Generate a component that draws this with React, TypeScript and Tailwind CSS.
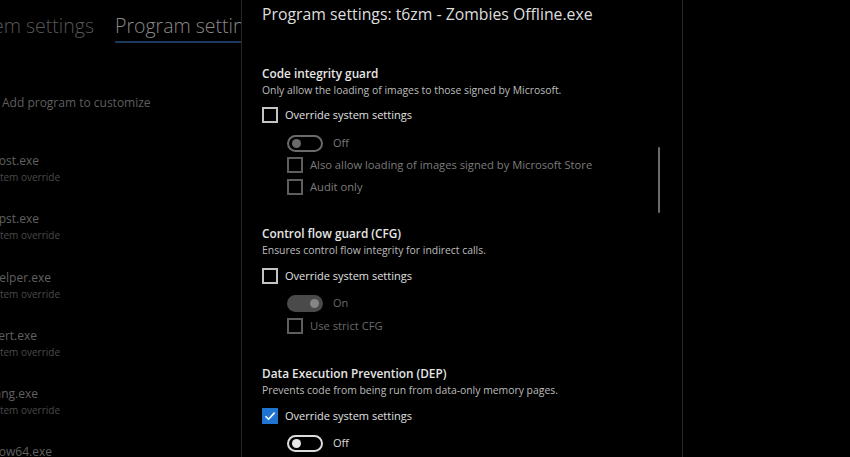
import React from "react";

const font = { fontFamily: '"Open Sans", "Noto Sans", sans-serif' };

function Check({ checked, disabled }: { checked?: boolean; disabled?: boolean }) {
  if (checked) {
    return (
      <div className="w-[16px] h-[16px] shrink-0 bg-[#1f74d2] flex items-center justify-center">
        <svg width="12" height="12" viewBox="0 0 12 12">
          <path d="M1.5 6.2 L4.6 9.2 L10.6 2.6" fill="none" stroke="#ffffff" strokeWidth="1.6" />
        </svg>
      </div>
    );
  }
  return (
    <div
      className={
        disabled
          ? "w-[16px] h-[16px] shrink-0 border-2 border-[#5e5e5e]"
          : "w-[16px] h-[16px] shrink-0 border-2 border-[#c4c4c4]"
      }
    />
  );
}

function Toggle({ kind }: { kind: "offDisabled" | "onDisabled" | "off" }) {
  if (kind === "onDisabled") {
    return (
      <div className="w-[36px] h-[17px] rounded-full bg-[#4a4a4a] flex items-center justify-end pr-[4px] shrink-0">
        <div className="w-[9px] h-[9px] rounded-full bg-[#858585]" />
      </div>
    );
  }
  if (kind === "offDisabled") {
    return (
      <div className="w-[36px] h-[17px] rounded-full border-2 border-[#6a6a6a] flex items-center pl-[3px] shrink-0">
        <div className="w-[9px] h-[9px] rounded-full bg-[#6a6a6a]" />
      </div>
    );
  }
  return (
    <div className="w-[36px] h-[17px] rounded-full border-2 border-[#dcdcdc] flex items-center pl-[3px] shrink-0">
      <div className="w-[9px] h-[9px] rounded-full bg-[#e6e6e6]" />
    </div>
  );
}

const items = [
  { name: "PresentationHost.exe", w: "w-[39px]" },
  { name: "scanpst.exe", w: "w-[39px]" },
  { name: "sdxhelper.exe", w: "w-[51px]" },
  { name: "SelfCert.exe", w: "w-[37px]" },
  { name: "setlang.exe", w: "w-[38px]" },
  { name: "splwow64.exe", w: "w-[52px]" },
];

export default function App() {
  return (
    <div className="w-[850px] h-[457px] bg-black flex overflow-hidden" style={font}>
      {/* Left (dimmed) page */}
      <div className="w-[241px] h-full shrink-0 overflow-hidden flex flex-col">
        <div className="h-[43px] flex shrink-0">
          <div className="w-[94px] shrink-0 flex justify-end overflow-hidden whitespace-nowrap">
            <span className="text-[19.5px] leading-[28px] mt-[12px] font-light text-[#575757]">System settings</span>
          </div>
          <div className="ml-[21px] shrink-0 whitespace-nowrap h-[43px] border-b-2 border-[#1d3a5c] pt-[12px]">
            <span className="text-[19.5px] leading-[28px] font-light text-[#8a8a8a] block">Program settings</span>
          </div>
        </div>
        <div className="mt-[51px] h-[20px] flex items-center pl-[2px] text-[12px] text-[#5e5e5e] whitespace-nowrap">
          Add program to customize
        </div>
        <div className="mt-[40px] flex flex-col">
          {items.map((it) => (
            <div key={it.name} className="h-[58.3px] shrink-0 flex flex-col">
              <div className={it.w + " flex justify-end overflow-hidden whitespace-nowrap"}>
                <span className="text-[12px] leading-[18px] text-[#606060]">{it.name}</span>
              </div>
              <div className="w-[60px] flex justify-end overflow-hidden whitespace-nowrap">
                <span className="text-[10px] leading-[15px] text-[#4a4a4a]">System override</span>
              </div>
            </div>
          ))}
        </div>
      </div>

      {/* Dialog panel */}
      <div className="relative w-[442px] h-full shrink-0 border-l border-r border-[#262626] bg-black pl-5 flex flex-col">
        <div className="h-[30px] flex items-center text-[15.8px] text-[#dedede] whitespace-nowrap">
          Program settings: t6zm - Zombies Offline.exe
        </div>

        {/* Code integrity guard */}
        <div className="mt-[36px] h-[16px] flex items-center text-[11.8px] font-semibold text-[#e6e6e6]">Code integrity guard</div>
        <div className="mt-[1px] h-[16px] flex items-center text-[10.4px] text-[#bdbdbd]">
          Only allow the loading of images to those signed by Microsoft.
        </div>
        <div className="mt-[6px] h-[20px] flex items-center gap-[7px]">
          <Check />
          <span className="text-[11px] text-[#e0e0e0]">Override system settings</span>
        </div>
        <div className="mt-2 h-[20px] flex items-center pl-[25px] gap-[10px]">
          <Toggle kind="offDisabled" />
          <span className="text-[11px] text-[#787878]">Off</span>
        </div>
        <div className="mt-[2px] h-[20px] flex items-center pl-[25px] gap-[7px]">
          <Check disabled />
          <span className="text-[11.2px] text-[#7c7c7c]">Also allow loading of images signed by Microsoft Store</span>
        </div>
        <div className="mt-[2px] h-[20px] flex items-center pl-[25px] gap-[7px]">
          <Check disabled />
          <span className="text-[11.2px] text-[#7c7c7c]">Audit only</span>
        </div>

        {/* Control flow guard */}
        <div className="mt-[29px] h-[16px] flex items-center text-[11.8px] font-semibold text-[#e6e6e6]">Control flow guard (CFG)</div>
        <div className="mt-[1px] h-[16px] flex items-center text-[10.4px] text-[#bdbdbd]">
          Ensures control flow integrity for indirect calls.
        </div>
        <div className="mt-[7px] h-[20px] flex items-center gap-[7px]">
          <Check />
          <span className="text-[11px] text-[#e0e0e0]">Override system settings</span>
        </div>
        <div className="mt-[7px] h-[20px] flex items-center pl-[25px] gap-[10px]">
          <Toggle kind="onDisabled" />
          <span className="text-[11px] text-[#6a6a6a]">On</span>
        </div>
        <div className="mt-[3px] h-[20px] flex items-center pl-[25px] gap-[7px]">
          <Check disabled />
          <span className="text-[11.2px] text-[#6a6a6a]">Use strict CFG</span>
        </div>

        {/* DEP */}
        <div className="mt-[30px] h-[16px] flex items-center text-[11.8px] font-semibold text-[#e6e6e6]">Data Execution Prevention (DEP)</div>
        <div className="mt-[1px] h-[16px] flex items-center text-[10.4px] text-[#bdbdbd]">
          Prevents code from being run from data-only memory pages.
        </div>
        <div className="mt-[7px] h-[20px] flex items-center gap-[7px]">
          <Check checked />
          <span className="text-[11px] text-[#e0e0e0]">Override system settings</span>
        </div>
        <div className="mt-[7px] h-[20px] flex items-center pl-[25px] gap-[10px]">
          <Toggle kind="off" />
          <span className="text-[11px] text-[#dcdcdc]">Off</span>
        </div>

        {/* scroll indicator */}
        <div className="absolute left-[416px] top-[147px] w-[2px] h-[66px] rounded-full bg-[#6c6c6c]" />
      </div>

      <div className="flex-1 h-full bg-black" />
    </div>
  );
}
